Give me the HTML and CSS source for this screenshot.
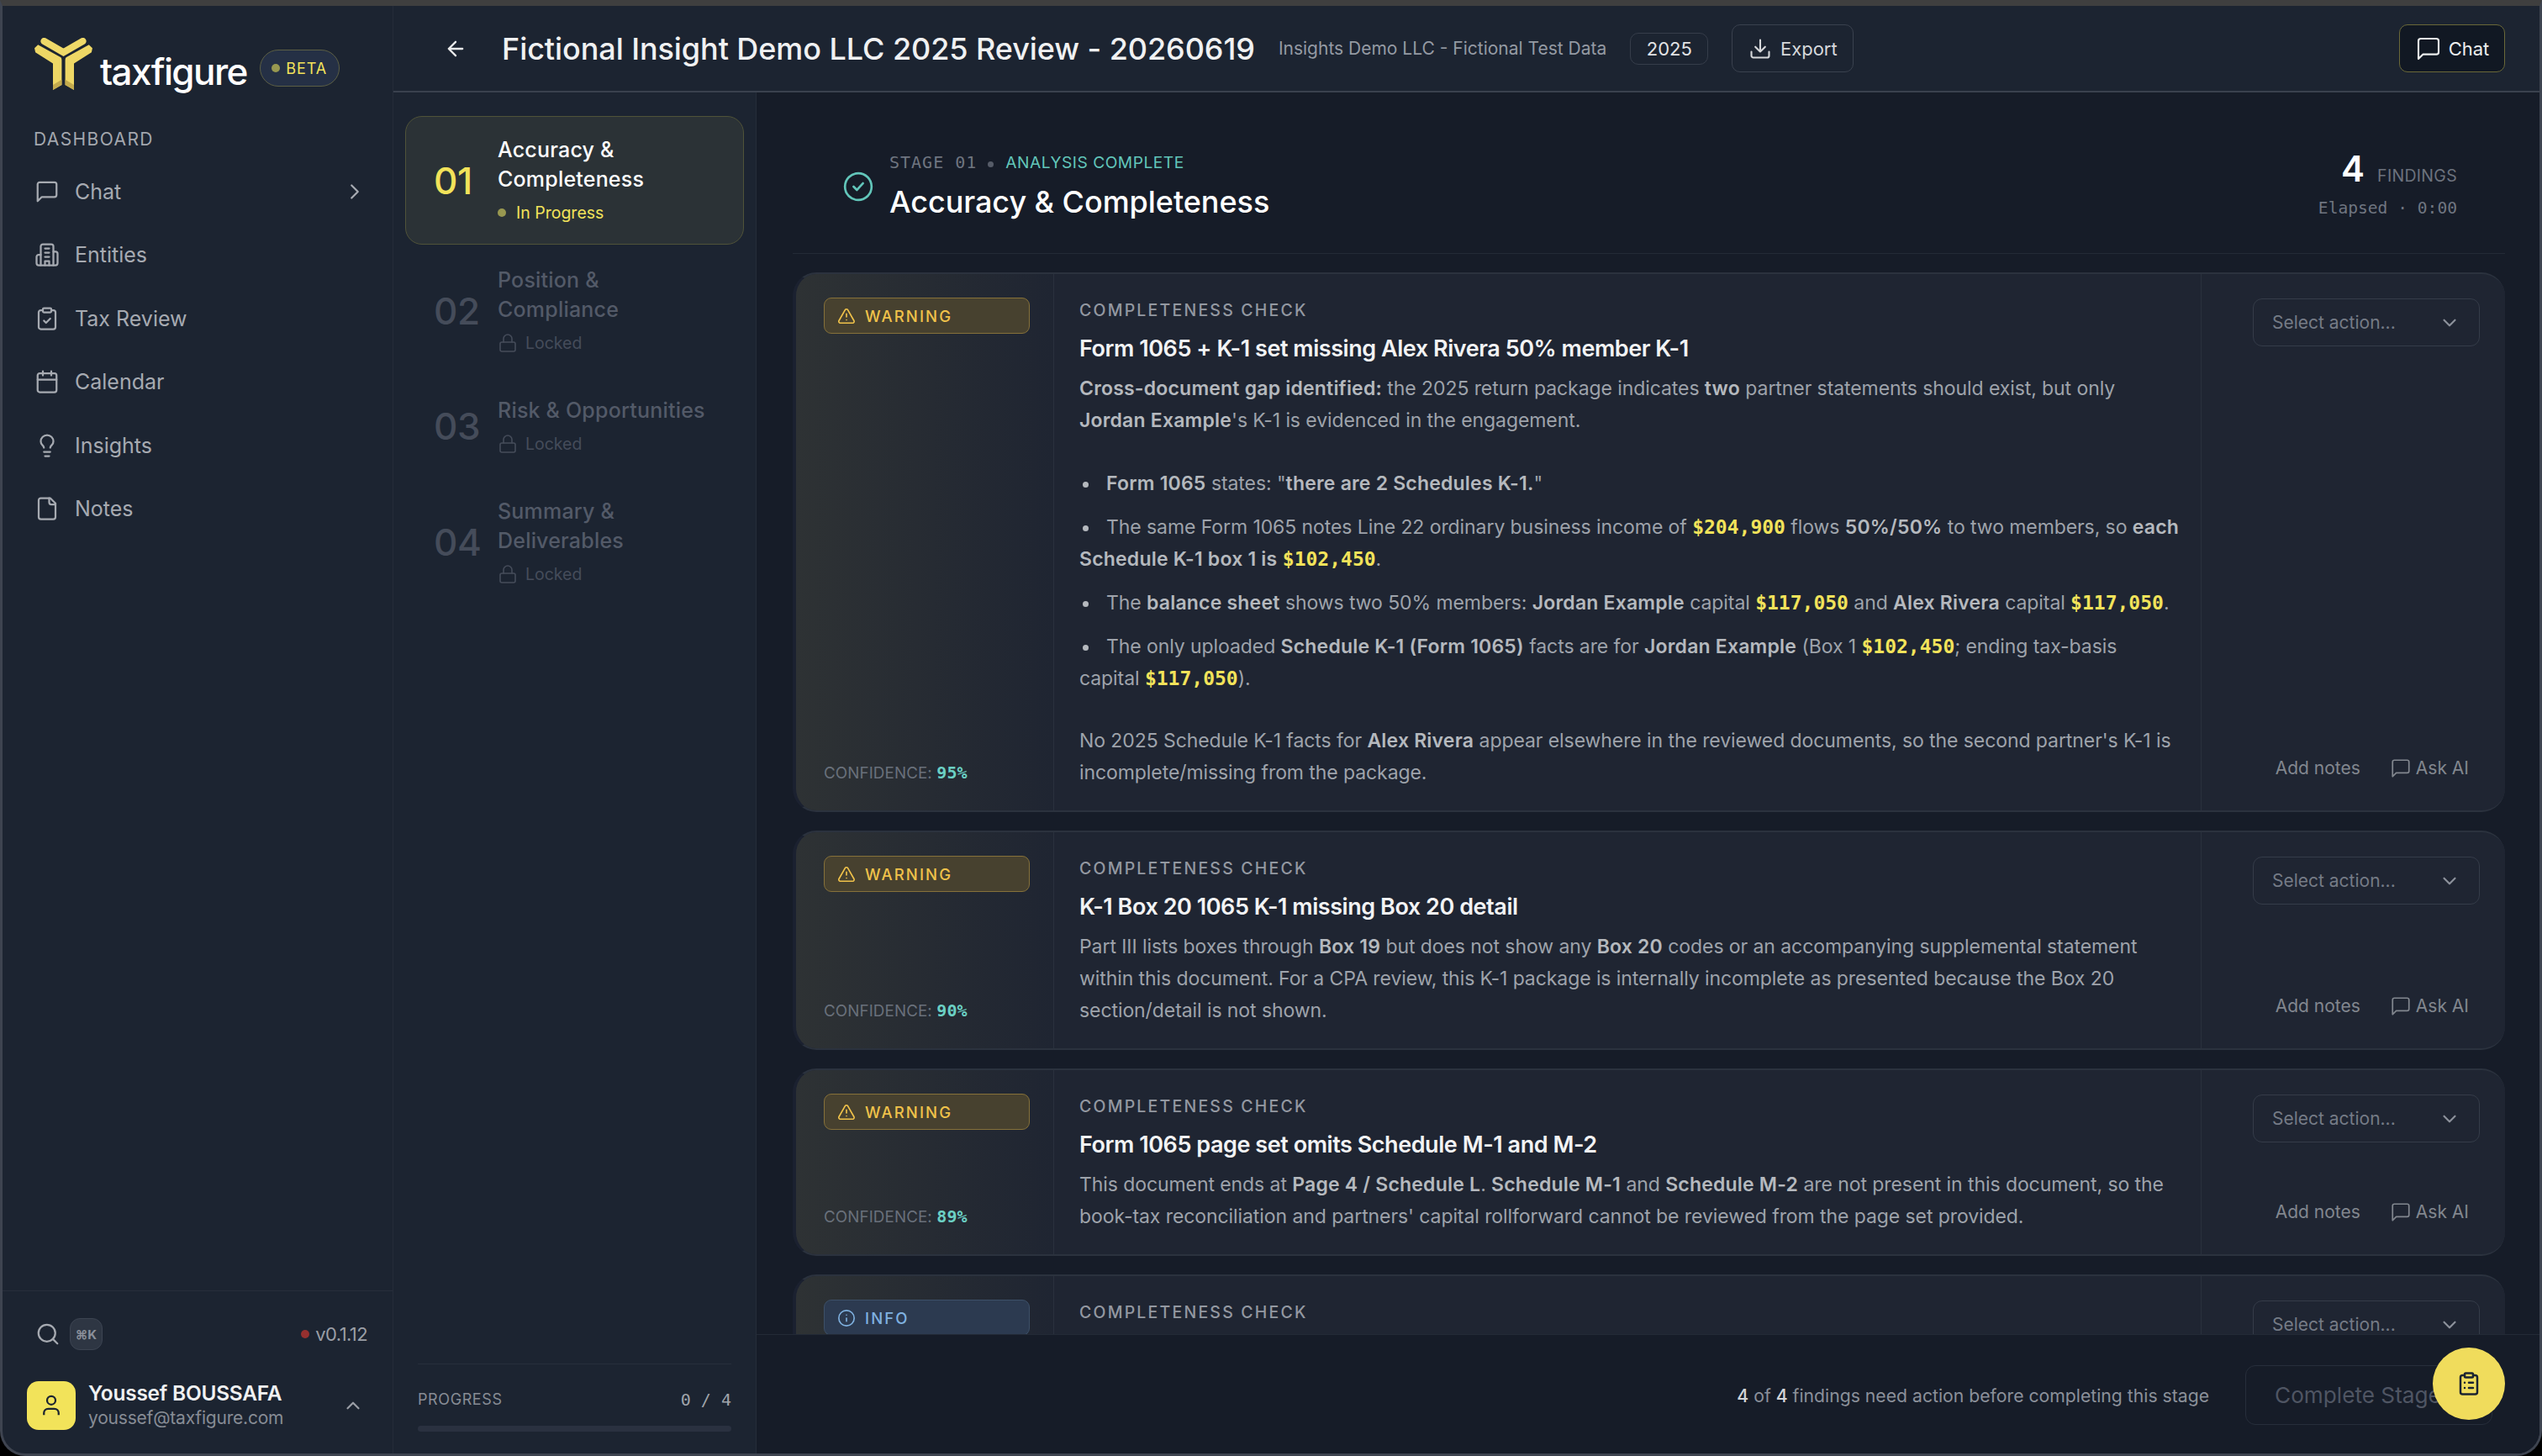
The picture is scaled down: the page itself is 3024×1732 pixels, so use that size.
FILE: index.html
```html
<!DOCTYPE html>
<html lang="en">
<head>
<meta charset="utf-8">
<title>taxfigure</title>
<link rel="stylesheet" href="styles.css">
</head>
<body>
<svg class="sprite" aria-hidden="true">
  <symbol id="i-chat" viewBox="0 0 24 24"><path d="M21 15a2 2 0 0 1-2 2H7l-4 4V5a2 2 0 0 1 2-2h14a2 2 0 0 1 2 2z"/></symbol>
  <symbol id="i-lock" viewBox="0 0 24 24"><rect x="3" y="11" width="18" height="11" rx="2"/><path d="M7 11V7a5 5 0 0 1 10 0v4"/></symbol>
  <symbol id="i-warn" viewBox="0 0 24 24"><path d="m21.7 18-8-14a2 2 0 0 0-3.5 0l-8 14A2 2 0 0 0 4 21h16a2 2 0 0 0 1.7-3"/><path d="M12 9v4M12 17h.01"/></symbol>
  <symbol id="i-down" viewBox="0 0 24 24"><path d="m6 9 6 6 6-6"/></symbol>
</svg>
<div class="window">
  <aside class="sidebar">
    <div class="brand">
      <svg class="logo" viewBox="2 5 68 62" preserveAspectRatio="none">
        <path class="logo-top" d="M14 9 36 22 58 9"/>
        <path class="logo-leg" d="M3 17 7 13 33 28Q34 29 34 31V60L24 66V35L4 22Z"/>
        <path class="logo-leg" d="M69 17 65 13 39 28Q38 29 38 31V60L48 66V35L68 22Z"/>
        <path class="logo-shade" d="M24 66V60L34 54V60ZM48 66V60L38 54V60Z"/>
      </svg>
      <span class="wordmark">taxfigure</span>
      <span class="beta"><i class="dot-olive"></i>BETA</span>
    </div>
    <div class="nav-label">DASHBOARD</div>
    <nav class="nav">
      <a class="nav-item"><svg class="ico"><use href="#i-chat"/></svg><span>Chat</span><svg class="ico chev" viewBox="0 0 24 24"><path d="m9 6 6 6-6 6"/></svg></a>
      <a class="nav-item"><svg class="ico" viewBox="0 0 24 24"><path d="M6 22V4a2 2 0 0 1 2-2h8a2 2 0 0 1 2 2v18Z"/><path d="M6 12H4a2 2 0 0 0-2 2v6a2 2 0 0 0 2 2h2M18 9h2a2 2 0 0 1 2 2v9a2 2 0 0 1-2 2h-2M10 6h4M10 10h4M10 14h4M10 22v-4h4v4"/></svg><span>Entities</span></a>
      <a class="nav-item"><svg class="ico" viewBox="0 0 24 24"><rect x="8" y="2" width="8" height="4" rx="1"/><path d="M16 4h2a2 2 0 0 1 2 2v14a2 2 0 0 1-2 2H6a2 2 0 0 1-2-2V6a2 2 0 0 1 2-2h2"/><path d="m9 14 2 2 4-4"/></svg><span>Tax Review</span></a>
      <a class="nav-item"><svg class="ico" viewBox="0 0 24 24"><path d="M8 2v4M16 2v4"/><rect x="3" y="4" width="18" height="18" rx="2"/><path d="M3 10h18"/></svg><span>Calendar</span></a>
      <a class="nav-item"><svg class="ico" viewBox="0 0 24 24"><path d="M15 14c.2-1 .7-1.7 1.5-2.5 1-.9 1.5-2.2 1.5-3.5A6 6 0 0 0 6 8c0 1 .2 2.2 1.5 3.5.7.7 1.3 1.5 1.5 2.5"/><path d="M9 18h6M10 22h4"/></svg><span>Insights</span></a>
      <a class="nav-item"><svg class="ico" viewBox="0 0 24 24"><path d="M15 2H6a2 2 0 0 0-2 2v16a2 2 0 0 0 2 2h12a2 2 0 0 0 2-2V7Z"/><path d="M14 2v4a2 2 0 0 0 2 2h4"/></svg><span>Notes</span></a>
    </nav>
    <div class="side-foot">
      <div class="tools">
        <svg class="ico" viewBox="0 0 24 24"><circle cx="11" cy="11" r="8"/><path d="m21 21-4.3-4.3"/></svg>
        <span class="kbd">⌘K</span>
        <span class="version"><i class="dot-red"></i>v0.1.12</span>
      </div>
      <div class="user">
        <span class="avatar"><svg viewBox="0 0 24 24"><path d="M19 21v-2a4 4 0 0 0-4-4H9a4 4 0 0 0-4 4v2"/><circle cx="12" cy="7" r="4"/></svg></span>
        <span class="user-text"><b>Youssef BOUSSAFA</b><small>youssef@taxfigure.com</small></span>
        <svg class="ico up" viewBox="0 0 24 24"><path d="m18 15-6-6-6 6"/></svg>
      </div>
    </div>
  </aside>

  <div class="workspace">
    <header class="topbar">
      <svg class="ico back" viewBox="0 0 24 24"><path d="m12 19-7-7 7-7M19 12H5"/></svg>
      <h1>Fictional Insight Demo LLC 2025 Review - 20260619</h1>
      <span class="entity">Insights Demo LLC - Fictional Test Data</span>
      <span class="year">2025</span>
      <button class="btn-export"><svg class="ico" viewBox="0 0 24 24"><path d="M21 15v4a2 2 0 0 1-2 2H5a2 2 0 0 1-2-2v-4M7 10l5 5 5-5M12 15V3"/></svg>Export</button>
      <button class="btn-chat"><svg class="ico"><use href="#i-chat"/></svg>Chat</button>
    </header>
    <div class="columns">
      <section class="stages">
        <div class="stage active">
          <span class="num">01</span>
          <div class="stage-body"><div class="stage-title">Accuracy &amp; Completeness</div><div class="stage-sub"><i class="dot-olive"></i>In Progress</div></div>
        </div>
        <div class="stage">
          <span class="num">02</span>
          <div class="stage-body"><div class="stage-title">Position &amp; Compliance</div><div class="stage-sub"><svg class="ico"><use href="#i-lock"/></svg>Locked</div></div>
        </div>
        <div class="stage">
          <span class="num">03</span>
          <div class="stage-body"><div class="stage-title">Risk &amp; Opportunities</div><div class="stage-sub"><svg class="ico"><use href="#i-lock"/></svg>Locked</div></div>
        </div>
        <div class="stage">
          <span class="num">04</span>
          <div class="stage-body"><div class="stage-title">Summary &amp; Deliverables</div><div class="stage-sub"><svg class="ico"><use href="#i-lock"/></svg>Locked</div></div>
        </div>
        <div class="progress">
          <div class="progress-row"><span>PROGRESS</span><code>0 / 4</code></div>
          <div class="track"></div>
        </div>
      </section>

      <main class="main">
        <div class="scroll">
          <div class="stage-head">
            <svg class="check" viewBox="0 0 24 24"><circle cx="12" cy="12" r="10"/><path d="m8.5 12 2.5 2.5 4.5-5"/></svg>
            <div class="head-text">
              <div class="eyebrow"><code>STAGE 01</code><i></i><span>ANALYSIS COMPLETE</span></div>
              <h2>Accuracy &amp; Completeness</h2>
            </div>
            <div class="head-stats">
              <div class="count"><b>4</b><span>FINDINGS</span></div>
              <code>Elapsed · 0:00</code>
            </div>
          </div>

          <article class="card">
            <div class="card-left">
              <span class="badge warn"><svg class="ico"><use href="#i-warn"/></svg>WARNING</span>
              <span class="conf">CONFIDENCE: <code>95%</code></span>
            </div>
            <div class="card-mid">
              <div class="check-label">COMPLETENESS CHECK</div>
              <h3>Form 1065 + K-1 set missing Alex Rivera 50% member K-1</h3>
              <p><b>Cross-document gap identified:</b> the 2025 return package indicates <b>two</b> partner statements should exist, but only <b>Jordan Example</b>'s K-1 is evidenced in the engagement.</p>
              <ul>
                <li><b>Form 1065</b> states: "<b>there are 2 Schedules K-1.</b>"</li>
                <li>The same Form 1065 notes Line 22 ordinary business income of <code>$204,900</code> flows <b>50%/50%</b> to two members, so <b>each Schedule K-1 box 1 is</b> <code>$102,450</code>.</li>
                <li>The <b>balance sheet</b> shows two 50% members: <b>Jordan Example</b> capital <code>$117,050</code> and <b>Alex Rivera</b> capital <code>$117,050</code>.</li>
                <li>The only uploaded <b>Schedule K-1 (Form 1065)</b> facts are for <b>Jordan Example</b> (Box 1 <code>$102,450</code>; ending tax-basis<br>capital <code>$117,050</code>).</li>
              </ul>
              <p>No 2025 Schedule K-1 facts for <b>Alex Rivera</b> appear elsewhere in the reviewed documents, so the second partner's K-1 is incomplete/missing from the package.</p>
            </div>
            <div class="card-right">
              <div class="select">Select action...<svg class="ico"><use href="#i-down"/></svg></div>
              <div class="links"><span>Add notes</span><span class="ask"><svg class="ico"><use href="#i-chat"/></svg>Ask AI</span></div>
            </div>
          </article>

          <article class="card">
            <div class="card-left">
              <span class="badge warn"><svg class="ico"><use href="#i-warn"/></svg>WARNING</span>
              <span class="conf">CONFIDENCE: <code>90%</code></span>
            </div>
            <div class="card-mid">
              <div class="check-label">COMPLETENESS CHECK</div>
              <h3>K-1 Box 20 1065 K-1 missing Box 20 detail</h3>
              <p>Part III lists boxes through <b>Box 19</b> but does not show any <b>Box 20</b> codes or an accompanying supplemental statement within this document. For a CPA review, this K-1 package is internally incomplete as presented because the Box 20 section/detail is not shown.</p>
            </div>
            <div class="card-right">
              <div class="select">Select action...<svg class="ico"><use href="#i-down"/></svg></div>
              <div class="links"><span>Add notes</span><span class="ask"><svg class="ico"><use href="#i-chat"/></svg>Ask AI</span></div>
            </div>
          </article>

          <article class="card">
            <div class="card-left">
              <span class="badge warn"><svg class="ico"><use href="#i-warn"/></svg>WARNING</span>
              <span class="conf">CONFIDENCE: <code>89%</code></span>
            </div>
            <div class="card-mid">
              <div class="check-label">COMPLETENESS CHECK</div>
              <h3>Form 1065 page set omits Schedule M-1 and M-2</h3>
              <p>This document ends at <b>Page 4 / Schedule L</b>. <b>Schedule M-1</b> and <b>Schedule M-2</b> are not present in this document, so the book-tax reconciliation and partners' capital rollforward cannot be reviewed from the page set provided.</p>
            </div>
            <div class="card-right">
              <div class="select">Select action...<svg class="ico"><use href="#i-down"/></svg></div>
              <div class="links"><span>Add notes</span><span class="ask"><svg class="ico"><use href="#i-chat"/></svg>Ask AI</span></div>
            </div>
          </article>

          <article class="card">
            <div class="card-left">
              <span class="badge info"><svg class="ico" viewBox="0 0 24 24"><circle cx="12" cy="12" r="10"/><path d="M12 16v-4M12 8h.01"/></svg>INFO</span>
            </div>
            <div class="card-mid">
              <div class="check-label">COMPLETENESS CHECK</div>
            </div>
            <div class="card-right">
              <div class="select">Select action...<svg class="ico"><use href="#i-down"/></svg></div>
            </div>
          </article>
        </div>
        <footer class="footbar">
          <span class="foot-note"><b>4</b> of <b>4</b> findings need action before completing this stage</span>
          <button class="btn-complete">Complete Stage</button>
        </footer>
        <button class="fab" aria-label="Review checklist"><svg viewBox="0 0 24 24"><rect x="8" y="2" width="8" height="4" rx="1"/><path d="M16 4h2a2 2 0 0 1 2 2v14a2 2 0 0 1-2 2H6a2 2 0 0 1-2-2V6a2 2 0 0 1 2-2h2"/><path d="M12 11h4M12 16h4M8 11h.01M8 16h.01"/></svg></button>
      </main>
    </div>
  </div>
</div>
</body>
</html>
```

FILE: styles.css
```css
* { box-sizing: border-box; }
html, body { margin: 0; padding: 0; background: #000; }
body { font-family: Inter, "Noto Sans", sans-serif; color: #9ea3ab; }
code { font-family: "DejaVu Sans Mono", "Liberation Mono", monospace; }
i { font-style: normal; display: inline-block; }
button { font-family: inherit; cursor: default; }
h1, h2, h3, p, ul { margin: 0; padding: 0; }
.sprite { display: none; }
.ico { width: 26px; height: 26px; fill: none; stroke: currentColor; stroke-width: 2; stroke-linecap: round; stroke-linejoin: round; flex: none; }

.window { width: 3024px; height: 1732px; display: flex; background: #1c2431; border: 3px solid #3e4450; border-top: 7px solid #3f3f3f; border-radius: 0 0 30px 30px; overflow: hidden; }

/* sidebar */
.sidebar { width: 465px; flex: none; display: flex; flex-direction: column; border-right: 1px solid #252c39; }
.brand { height: 103px; padding: 38px 0 0 37px; display: flex; align-items: flex-start; }
.logo { width: 71px; height: 63px; flex: none; }
.logo-top { fill: none; stroke: #efd968; stroke-width: 8; stroke-linecap: round; stroke-linejoin: miter; }
.logo-leg { fill: #eed765; }
.logo-shade { fill: #c4ab4e; }
.wordmark { margin: 16px 0 0 8px; color: #fff; font-size: 44px; line-height: 48px; font-weight: 500; letter-spacing: -1.6px; }
.beta { margin: 14px 0 0 15px; height: 44px; width: 95px; border: 1px solid #5c5f45; border-radius: 22px; background: #253045; color: #f2e35a; font-size: 18px; letter-spacing: 1px; display: flex; align-items: center; justify-content: center; gap: 7px; }
.dot-olive { width: 10px; height: 10px; border-radius: 50%; background: #989850; flex: none; }
.nav-label { margin: 42px 0 0 37px; font-size: 21px; line-height: 28px; letter-spacing: 1.4px; color: #a3a7ae; }
.nav { margin-top: 10px; display: flex; flex-direction: column; }
.nav-item { height: 75.5px; padding: 0 30px 0 38px; display: flex; align-items: center; gap: 18px; color: #a6aab1; font-size: 25px; }
.nav-item .ico { width: 30px; height: 30px; stroke-width: 1.8; }
.nav-item span { flex: 1; }
.side-foot { margin-top: auto; height: 194px; border-top: 1px solid #272e3b; padding: 32px 0 0; }
.tools { height: 38px; padding: 0 30px 0 39px; display: flex; align-items: center; color: #a6aab1; }
.tools .ico { width: 30px; height: 30px; stroke-width: 1.8; }
.kbd { margin-left: 11px; width: 39px; height: 38px; border-radius: 12px; background: #2e3643; border: 1px solid #3c4452; display: flex; align-items: center; justify-content: center; font-size: 15px; font-weight: 700; color: #8b909a; }
.version { margin-left: auto; font-size: 22px; display: flex; align-items: center; gap: 7px; letter-spacing: -.6px; color: #9a9ea6; }
.dot-red { width: 10px; height: 10px; border-radius: 50%; background: #96302f; }
.user { margin-top: 36px; padding: 0 34px 0 29px; display: flex; align-items: center; }
.avatar { width: 58px; height: 58px; border-radius: 14px; background: #f2e35a; display: flex; align-items: center; justify-content: center; flex: none; }
.avatar svg { width: 30px; height: 30px; fill: none; stroke: #1c2431; stroke-width: 1.8; }
.user-text { margin-left: 15px; display: flex; flex-direction: column; flex: 1; }
.user-text b { color: #f0f1f2; font-size: 24.4px; line-height: 30px; font-weight: 600; letter-spacing: -.2px; white-space: nowrap; }
.user-text small { font-size: 21px; line-height: 29px; color: #878c95; white-space: nowrap; letter-spacing: -.2px; }
.up { color: #9a9ea6; }

/* top bar */
.workspace { flex: 1; min-width: 0; display: flex; flex-direction: column; }
.topbar { height: 103px; flex: none; border-bottom: 2px solid #3a414e; display: flex; align-items: center; padding: 0 41px 0 60px; }
.back { color: #e8e9ea; width: 28px; height: 28px; }
h1 { margin-left: 41px; font-size: 36px; font-weight: 500; color: #f0f1f2; white-space: nowrap; letter-spacing: -.07px; }
.entity { margin-left: 28px; font-size: 21px; color: #949aa3; white-space: nowrap; }
.year { margin-left: 28px; width: 93px; height: 38px; border: 1px solid #363d4a; border-radius: 10px; color: #e2e3e5; font-size: 22px; display: flex; align-items: center; justify-content: center; }
.btn-export, .btn-chat { height: 57px; border-radius: 10px; display: flex; align-items: center; font-size: 22px; }
.btn-export { margin-left: 28px; width: 145px; border: 1px solid #3a414e; background: transparent; color: #d6d8db; justify-content: center; gap: 10px; }
.btn-export .ico { width: 28px; height: 28px; stroke-width: 1.8; }
.btn-chat { margin-left: auto; width: 126px; border: 1px solid #6a6838; background: #111823; color: #eceded; justify-content: center; gap: 8px; }
.btn-chat .ico { width: 32px; height: 32px; stroke-width: 1.6; }

.columns { flex: 1; min-height: 0; display: flex; }

/* stage list */
.stages { width: 432px; flex: none; padding: 28px 14px 0; border-right: 1px solid #252c39; display: flex; flex-direction: column; position: relative; }
.stage { display: flex; align-items: center; padding: 22px 33px; border: 1px solid transparent; border-radius: 20px; margin-bottom: 2px; }
.stage.active { background: #2b3236; border-color: #505339; }
.num { width: 76px; flex: none; font-size: 44px; font-weight: 500; color: #454c5a; letter-spacing: -.5px; }
.stage-title { font-size: 25px; line-height: 35px; font-weight: 500; color: #535a68; letter-spacing: .2px; }
.stage-sub { margin-top: 7px; font-size: 19.5px; line-height: 30px; display: flex; align-items: center; gap: 9px; color: #454c5a; }
.stage-sub .ico { width: 24px; height: 24px; stroke-width: 1.6; }
.active .stage-sub { gap: 12px; }
.active .num, .active .stage-sub { color: #f2e35a; }
.active .stage-title { color: #fff; }
.progress { margin-top: auto; height: 107px; margin-left: 15px; margin-right: 15px; border-top: 1px solid #272e3b; padding-top: 28px; }
.progress-row { display: flex; justify-content: space-between; align-items: center; font-size: 18px; letter-spacing: .6px; line-height: 28px; color: #878c95; }
.progress-row code { font-size: 20px; letter-spacing: 0; color: #a0a4ab; }
.track { margin-top: 17px; height: 7px; background: #2a3140; border-radius: 4px; }

/* main */
.main { flex: 1; min-width: 0; display: flex; flex-direction: column; position: relative; background: #161c28; }
.scroll { flex: 1; min-height: 0; overflow: hidden; padding: 0 41px 0 43px; }
.stage-head { height: 192px; border-bottom: 1px solid #232a36; display: flex; align-items: flex-start; padding: 0 57px 0 59px; position: relative; }
.check { width: 38px; height: 38px; margin-top: 93px; flex: none; fill: none; stroke: #62c6ba; stroke-width: 1.7; stroke-linecap: round; stroke-linejoin: round; }
.head-text { margin: 68px 0 0 18px; }
.eyebrow { display: flex; align-items: center; height: 30px; font-size: 19.2px; }
.eyebrow code { color: #6f7580; font-size: 20px; letter-spacing: 1px; }
.eyebrow i { width: 7px; height: 7px; border-radius: 50%; background: #565c68; margin: 4px 14px 0 13px; }
.eyebrow span { color: #62c6ba; letter-spacing: .5px; }
h2 { margin-top: 9px; font-size: 36px; line-height: 46px; font-weight: 500; color: #fff; letter-spacing: -.05px; }
.head-stats { margin-left: auto; padding-top: 66px; text-align: right; }
.count { display: flex; align-items: baseline; justify-content: flex-end; gap: 15px; line-height: 50px; }
.count b { font-size: 42px; font-weight: 600; color: #fff; }
.count span { font-size: 19.5px; color: #6c727d; letter-spacing: .3px; }
.head-stats code { display: block; margin-top: 1px; font-size: 19.6px; line-height: 26px; color: #6f7580; }

/* cards */
.card { margin-top: 22px; display: flex; background: #1f2532; border-radius: 28px; border-top: 2px solid #2b323e; border-bottom: 2px solid #2b323e; border-left: 4px solid #1b2130; overflow: hidden; }
.card-left { width: 307px; flex: none; padding: 28px 33px 30px; border-right: 1px solid #2a313d; background: linear-gradient(90deg, #2e3234 0%, #1f2532 100%); display: flex; flex-direction: column; justify-content: space-between; align-items: flex-start; }
.badge { width: 245px; height: 43px; border-radius: 9px; display: flex; align-items: center; gap: 11px; padding-left: 15px; font-size: 18.5px; font-weight: 500; letter-spacing: 2.1px; }
.badge .ico { width: 22px; height: 22px; stroke-width: 1.8; }
.warn { background: #47412f; border: 1px solid #86713a; color: #f0c24a; }
.info { background: #2c3a50; border: 1px solid #3d5068; color: #7fb1e0; }
.conf { font-size: 18.8px; line-height: 28px; color: #69707b; letter-spacing: .1px; }
.conf code { color: #6bd0c4; font-weight: 700; font-size: 20px; }
.card-mid { width: 1365px; flex: none; padding: 29px 20px 26px 30px; border-right: 1px solid #2a313d; font-size: 23px; line-height: 38px; color: #9ea3ab; }
.check-label { font-size: 19.5px; line-height: 28px; letter-spacing: 2.2px; color: #9398a1; font-weight: 500; }
h3 { margin-top: 13px; font-size: 27px; line-height: 38px; font-weight: 600; color: #f2f3f4; letter-spacing: -.45px; }
.card-mid p { margin-top: 9px; letter-spacing: -.08px; }
.card-mid b { font-weight: 600; color: #b5b9be; letter-spacing: .2px; }
.card-mid code { font-size: 23px; font-weight: 700; color: #f2e35a; letter-spacing: 0; line-height: 1; }
ul { list-style: none; margin: 37px 0 36px; letter-spacing: -.08px; }
li { margin-top: 14px; }
li:first-child { margin-top: 0; }
li::before { content: ""; display: inline-block; width: 7px; height: 7px; border-radius: 50%; background: #b5b9be; margin: 0 21px 3px 4px; }
.card-mid ul + p { margin-top: 0; }
.card-right { flex: 1; padding: 29px 30px 36px 61px; display: flex; flex-direction: column; justify-content: space-between; }
.select { height: 57px; border: 1px solid #353c49; border-radius: 11px; display: flex; align-items: center; justify-content: space-between; padding: 0 22px; font-size: 21px; color: #757b86; }
.select .ico { color: #8b909a; }
.links { display: flex; justify-content: flex-end; align-items: center; gap: 35px; padding-right: 13px; font-size: 21px; line-height: 28px; color: #82878f; }
.ask { display: flex; align-items: center; gap: 5px; }
.ask .ico { width: 26px; height: 26px; stroke-width: 1.6; }

/* footer */
.footbar { height: 142px; flex: none; background: #161c28; border-top: 1px solid #232a36; display: flex; align-items: center; justify-content: flex-end; padding: 0 56px 0 0; position: relative; z-index: 1; }
.foot-note { font-size: 21.2px; color: #8b909a; margin-right: 43px; margin-top: 2px; }
.foot-note b { font-weight: 500; color: #d2d4d7; }
.btn-complete { width: 294px; height: 71px; margin-top: 2px; border: 1px solid #272e3b; border-radius: 12px; background: transparent; color: #4f5563; font-size: 26.2px; text-align: left; padding-left: 34px; white-space: nowrap; }
.fab { position: absolute; right: 41px; bottom: 40px; z-index: 2; width: 86px; height: 86px; border: 0; border-radius: 50%; background: #f0dc5c; display: flex; align-items: center; justify-content: center; }
.fab svg { width: 30px; height: 30px; fill: none; stroke: #1c2431; stroke-width: 2; stroke-linecap: round; stroke-linejoin: round; }
```
